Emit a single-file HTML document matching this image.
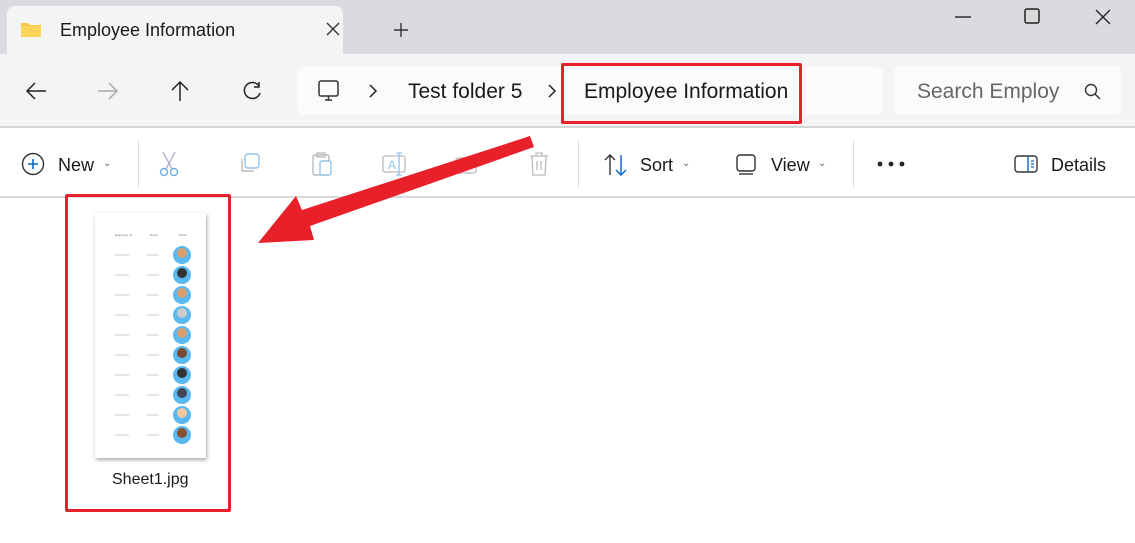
<!DOCTYPE html>
<html><head><style>
*{margin:0;padding:0;box-sizing:border-box}
body{width:1135px;height:543px;overflow:hidden;background:#fff;font-family:"Liberation Sans",sans-serif;position:relative;color:#1a1a1a}
.a{position:absolute}
</style></head><body>
<div class="a" style="left:0;top:0;width:1135px;height:54px;background:#dadbdf"></div>
<div class="a" style="left:7px;top:6px;width:336px;height:48px;background:#f3f4f6;border-radius:8px 8px 0 0"></div>
<svg class="a" style="left:20px;top:20px" width="22" height="18"><path d="M1 3h7l2 2h11v12H1z" fill="#f7c948"/><path d="M1 6h20v11H1z" fill="#fcd45c"/></svg>
<div class="a" style="left:60px;top:20px;font-size:18px">Employee Information</div>
<svg class="a" style="left:326px;top:22px" width="14" height="14"><path d="M1 1L13 13M13 1L1 13" stroke="#333" stroke-width="1.4"/></svg>
<svg class="a" style="left:393px;top:22px" width="16" height="16"><path d="M8 1V15M1 8H15" stroke="#333" stroke-width="1.4"/></svg>
<svg class="a" style="left:955px;top:16px" width="16" height="2"><path d="M0 1H16" stroke="#222" stroke-width="1.4"/></svg>
<svg class="a" style="left:1024px;top:8px" width="16" height="16"><rect x="1" y="1" width="14" height="14" rx="2" fill="none" stroke="#222" stroke-width="1.5"/></svg>
<svg class="a" style="left:1095px;top:9px" width="16" height="16"><path d="M1 1L15 15M15 1L1 15" stroke="#222" stroke-width="1.4"/></svg>
<div class="a" style="left:0;top:54px;width:1135px;height:73px;background:#f3f4f6"></div>
<div class="a" style="left:0;top:126px;width:1135px;height:2px;background:#d4d4d6"></div>
<svg class="a" style="left:25px;top:81px" width="22" height="20"><path d="M21 10H2M10 2L2 10L10 18" fill="none" stroke="#222" stroke-width="1.5"/></svg>
<svg class="a" style="left:97px;top:81px" width="22" height="20"><path d="M1 10H20M12 2L20 10L12 18" fill="none" stroke="#aaa" stroke-width="1.5"/></svg>
<svg class="a" style="left:169px;top:80px" width="22" height="22"><path d="M11 21V2M3 10L11 2L19 10" fill="none" stroke="#222" stroke-width="1.5"/></svg>
<svg class="a" style="left:241px;top:80px" width="22" height="22"><path d="M18 6A8 8 0 1 0 19 13" fill="none" stroke="#222" stroke-width="1.5"/><path d="M18 2V7H13" fill="none" stroke="#222" stroke-width="1.5"/></svg>
<div class="a" style="left:297px;top:67px;width:586px;height:48px;background:#fbfbfc;border-radius:6px"></div>
<svg class="a" style="left:317px;top:79px" width="24" height="24"><rect x="2" y="2" width="19" height="15" rx="2" fill="none" stroke="#333" stroke-width="1.5"/><path d="M8 21H15M11.5 17V21" stroke="#333" stroke-width="1.5"/></svg>
<svg class="a" style="left:368px;top:84px" width="10" height="14"><path d="M2 1L8 7L2 13" fill="none" stroke="#222" stroke-width="1.5"/></svg>
<div class="a" style="left:408px;top:80px;font-size:21px">Test folder 5</div>
<svg class="a" style="left:547px;top:84px" width="10" height="14"><path d="M2 1L8 7L2 13" fill="none" stroke="#222" stroke-width="1.5"/></svg>
<div class="a" style="left:584px;top:80px;font-size:21px">Employee Information</div>
<div class="a" style="left:561px;top:63px;width:241px;height:61px;border:3px solid #e8202a;border-radius:2px"></div>
<div class="a" style="left:894px;top:66px;width:227px;height:49px;background:#fbfbfc;border-radius:6px"></div>
<div class="a" style="left:917px;top:80px;font-size:21px;color:#666">Search Employ</div>
<svg class="a" style="left:1084px;top:83px" width="18" height="18"><circle cx="7" cy="7" r="5.5" fill="none" stroke="#333" stroke-width="1.4"/><path d="M11 11L16 16" stroke="#333" stroke-width="1.4"/></svg>
<div class="a" style="left:0;top:196px;width:1135px;height:2px;background:#d9d9d9"></div>
<svg class="a" style="left:21px;top:152px" width="24" height="24"><circle cx="12" cy="12" r="10.5" fill="none" stroke="#333" stroke-width="1.4"/><path d="M12 7V17M7 12H17" stroke="#0a64c8" stroke-width="1.6"/></svg>
<div class="a" style="left:58px;top:155px;font-size:18px">New</div>
<div class="a" style="left:103px;top:158px;font-size:10px;color:#666">⌄</div>
<div class="a" style="left:138px;top:140px;width:1px;height:48px;background:#ddd"></div>
<svg class="a" style="left:157px;top:150px" width="24" height="28"><path d="M6 2L15 19M18 2L9 19" stroke="#aac" stroke-width="1.3"/><circle cx="7" cy="22" r="3.5" fill="none" stroke="#6ab0e8" stroke-width="1.4"/><circle cx="17" cy="22" r="3.5" fill="none" stroke="#6ab0e8" stroke-width="1.4"/></svg>
<svg class="a" style="left:238px;top:152px" width="26" height="24"><rect x="7" y="2" width="14" height="14" rx="3" fill="none" stroke="#8fc3ee" stroke-width="1.4"/><path d="M4 7V19H16" fill="none" stroke="#bbb" stroke-width="1.4"/></svg>
<svg class="a" style="left:310px;top:151px" width="26" height="26"><rect x="3" y="4" width="16" height="20" rx="2" fill="none" stroke="#bbb" stroke-width="1.4"/><rect x="10" y="10" width="11" height="14" rx="2" fill="#fff" stroke="#8fc3ee" stroke-width="1.4"/><rect x="7" y="2" width="8" height="4" fill="none" stroke="#bbb" stroke-width="1.3"/></svg>
<svg class="a" style="left:381px;top:151px" width="28" height="26"><rect x="2" y="5" width="22" height="16" rx="2" fill="none" stroke="#bbb" stroke-width="1.3"/><text x="7" y="18" font-size="12" fill="#8fc3ee" font-family="Liberation Sans">A</text><path d="M18 2V24M15 2H21M15 24H21" stroke="#8fc3ee" stroke-width="1.3"/></svg>
<svg class="a" style="left:454px;top:152px" width="26" height="24"><rect x="2" y="6" width="20" height="15" rx="2" fill="none" stroke="#bbb" stroke-width="1.3"/></svg>
<svg class="a" style="left:528px;top:151px" width="22" height="26"><path d="M2 5H20M8 5V2H14V5M4 5L5 24H17L18 5M9 10V19M13 10V19" fill="none" stroke="#bbb" stroke-width="1.3"/></svg>
<div class="a" style="left:578px;top:140px;width:1px;height:48px;background:#ddd"></div>
<svg class="a" style="left:603px;top:153px" width="26" height="24"><path d="M7 22V2M2 7L7 2L12 7" fill="none" stroke="#333" stroke-width="1.4"/><path d="M18 2V22M13 17L18 22L23 17" fill="none" stroke="#0a64c8" stroke-width="1.4"/></svg>
<div class="a" style="left:640px;top:155px;font-size:18px">Sort</div>
<div class="a" style="left:682px;top:158px;font-size:10px;color:#666">⌄</div>
<svg class="a" style="left:735px;top:153px" width="24" height="24"><rect x="2" y="2" width="18" height="16" rx="3" fill="none" stroke="#333" stroke-width="1.4"/><path d="M4 21H18" stroke="#333" stroke-width="1.4"/></svg>
<div class="a" style="left:771px;top:155px;font-size:18px">View</div>
<div class="a" style="left:818px;top:158px;font-size:10px;color:#666">⌄</div>
<div class="a" style="left:853px;top:140px;width:1px;height:48px;background:#ddd"></div>
<svg class="a" style="left:876px;top:160px" width="30" height="8"><circle cx="4" cy="4" r="2.4" fill="#222"/><circle cx="15" cy="4" r="2.4" fill="#222"/><circle cx="26" cy="4" r="2.4" fill="#222"/></svg>
<svg class="a" style="left:1014px;top:154px" width="26" height="20"><rect x="1" y="2" width="22" height="16" rx="3" fill="none" stroke="#333" stroke-width="1.4"/><path d="M14 2V18" stroke="#0a64c8" stroke-width="1.4"/><path d="M17 7H20M17 10H20M17 13H20" stroke="#0a64c8" stroke-width="1.2"/></svg>
<div class="a" style="left:1051px;top:155px;font-size:18px">Details</div>
<div class="a" style="left:95px;top:213px;width:111px;height:245px;background:#fff;box-shadow:1px 2px 4px rgba(0,0,0,.35)">
<svg width="111" height="245" style="position:absolute;left:0;top:0">
<g font-size="3" fill="#777" font-family="Liberation Sans"><text x="20" y="23">Employee ID</text><text x="55" y="23">Name</text><text x="84" y="23">Photo</text></g>
<g fill="#5ab8f0">
<circle cx="87" cy="42" r="9"/><circle cx="87" cy="62" r="9"/><circle cx="87" cy="82" r="9"/><circle cx="87" cy="102" r="9"/><circle cx="87" cy="122" r="9"/><circle cx="87" cy="142" r="9"/><circle cx="87" cy="162" r="9"/><circle cx="87" cy="182" r="9"/><circle cx="87" cy="202" r="9"/><circle cx="87" cy="222" r="9"/></g>
<g fill="#d8a070"><circle cx="87" cy="40" r="5"/><circle cx="87" cy="60" r="5" fill="#333"/><circle cx="87" cy="80" r="5"/><circle cx="87" cy="100" r="5" fill="#ccc"/><circle cx="87" cy="120" r="5"/><circle cx="87" cy="140" r="5" fill="#7a4a30"/><circle cx="87" cy="160" r="5" fill="#333"/><circle cx="87" cy="180" r="5" fill="#445"/><circle cx="87" cy="200" r="5" fill="#f0c8a0"/><circle cx="87" cy="220" r="5" fill="#8a5030"/></g>
<g stroke="#ccc" stroke-width="1"><path d="M20 42H34M52 42H64M20 62H34M52 62H64M20 82H34M52 82H64M20 102H34M52 102H64M20 122H34M52 122H64M20 142H34M52 142H64M20 162H34M52 162H64M20 182H34M52 182H64M20 202H34M52 202H64M20 222H34M52 222H64"/></g>
</svg></div>
<div class="a" style="left:112px;top:471px;font-size:16px">Sheet1.jpg</div>
<div class="a" style="left:65px;top:194px;width:166px;height:318px;border:3px solid #e8202a;border-radius:2px"></div>
<svg class="a" style="left:0;top:0" width="1135" height="543"><path d="M530 136L534 147L310 226L314 240L258 243L296 196L302 210Z" fill="#e8202a"/></svg>
</body></html>
